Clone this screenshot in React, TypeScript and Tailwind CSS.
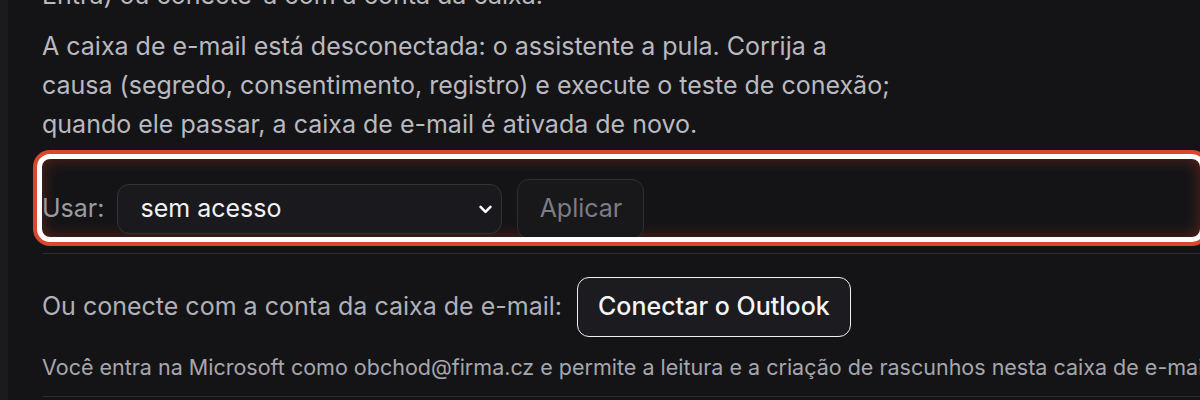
import React from "react";

export default function App() {
  return (
    <div
      className="w-[1200px] h-[400px] overflow-hidden bg-[#141417] flex"
      style={{ fontFamily: "Inter, 'Noto Sans', sans-serif" }}
    >
      <div className="w-[8px] shrink-0 bg-[#1b1b1e]" />
      <div className="flex-1 pl-[34px] min-w-0">
        <p className="mt-[-24px] text-[25px] leading-[39px] text-[#b9b9c0] whitespace-nowrap">
          Entra) ou conecte-a com a conta da caixa.
        </p>
        <p className="mt-[12px] max-w-[852px] text-[25px] leading-[39px] text-[#b9b9c0]">
          A caixa de e-mail está desconectada: o assistente a pula. Corrija a causa (segredo,
          consentimento, registro) e execute o teste de conexão; quando ele passar, a caixa de
          e-mail é ativada de novo.
        </p>
        <div className="mt-[15px] h-[78px] pt-[20px] rounded-[8px] outline-[5px] outline-solid outline-[#ffffff] shadow-[0_0_0_9px_#d9472c,inset_0_0_16px_rgba(200,60,30,0.4)] flex items-start">
          <div className="flex items-center gap-[13px] h-[60px]">
            <span className="text-[25px] text-[#9a9aa2]">Usar:</span>
            <div className="relative w-[385px] h-[50px] rounded-[12px] border border-[#33333a] bg-[#1a1a1e] flex items-center pl-[22px]">
              <span className="text-[25px] text-[#f2f2f4]">sem acesso</span>
              <svg
                className="absolute right-[7px] top-1/2 -translate-y-1/2"
                width="17"
                height="17"
                viewBox="0 0 24 24"
                fill="none"
                stroke="#ffffff"
                strokeWidth="3.6"
                strokeLinecap="round"
                strokeLinejoin="round"
              >
                <path d="M5 9l7 7 7-7" />
              </svg>
            </div>
            <div className="ml-[2px] w-[127px] h-[60px] rounded-[12px] border border-[#2e2e34] bg-[#18181b] flex items-center justify-center">
              <span className="text-[25px] text-[#7c7c84]">Aplicar</span>
            </div>
          </div>
        </div>
        <div className="mt-[16px] h-px bg-[#2c2c31]" />
        <div className="mt-[23px] flex items-center gap-[15px]">
          <span className="text-[25px] text-[#b0b0b8]">Ou conecte com a conta da caixa de e-mail:</span>
          <div className="h-[60px] px-[20px] rounded-[12px] border-[1.5px] border-[#f0f0f0] bg-[#1c1c20] flex items-center">
            <span className="text-[25px] font-medium text-[#f5f5f5]">Conectar o Outlook</span>
          </div>
        </div>
        <p className="mt-[16px] text-[21.5px] leading-[28px] text-[#a6a6ae] whitespace-nowrap">
          Você entra na Microsoft como obchod@firma.cz e permite a leitura e a criação de rascunhos nesta caixa de e-mail.
        </p>
        <div className="mt-[15px] h-px bg-[#2c2c31]" />
      </div>
    </div>
  );
}
